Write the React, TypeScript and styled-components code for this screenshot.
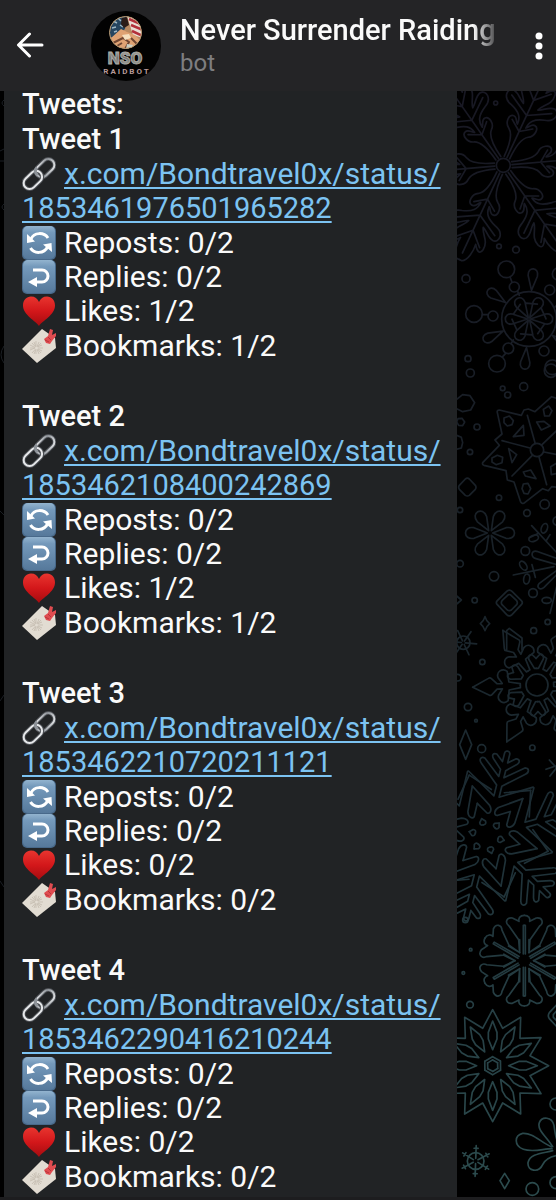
import React from "react";
import styled, { createGlobalStyle } from "styled-components";

const GlobalStyle = createGlobalStyle`
  * { box-sizing: border-box; }
  body {
    margin: 0;
    background: #1d1d1f;
    color: #fafafa;
    font-family: Roboto, "Liberation Sans", sans-serif;
  }
`;

const Page = styled.div`
  display: flex;
  flex-direction: column;
  min-height: 100vh;
`;

const Header = styled.header`
  position: sticky;
  top: 0;
  z-index: 2;
  display: flex;
  align-items: center;
  height: 91px;
  padding: 0 7px 0 12px;
  background: #242426;
`;

const IconButton = styled.button<{ $width: number }>`
  display: flex;
  align-items: center;
  justify-content: center;
  flex: none;
  width: ${(p) => p.$width}px;
  height: 48px;
  padding: 0;
  border: 0;
  background: none;
  color: #fff;
`;

const Avatar = styled.svg`
  flex: none;
  width: 70px;
  height: 70px;
  margin: 0 19px 0 43px;
`;

const Identity = styled.div`
  flex: 1;
  min-width: 0;
  margin-right: 28px;
`;

const ChatTitle = styled.h1`
  margin: 0;
  overflow: hidden;
  white-space: nowrap;
  font-size: 29px;
  font-weight: 500;
  line-height: 34px;
  mask-image: linear-gradient(to left, transparent, #000 28px);
`;

const ChatKind = styled.p`
  margin: 0;
  color: #7e7e80;
  font-size: 24px;
  line-height: 32px;
`;

const Chat = styled.main`
  position: relative;
  flex: 1;
  display: flex;
  margin-bottom: 3px;
  padding: 0 99px 0 4px;
  background: #000;
`;

const Wallpaper = styled.svg<{ $side: "left" | "right" }>`
  position: absolute;
  top: 0;
  ${(p) => p.$side}: 0;
  width: ${(p) => (p.$side === "left" ? 4 : 99)}px;
  height: 1106px;
`;

const Bubble = styled.article`
  flex: 1;
  margin-top: -4px;
  padding: 0 8px 3px 18px;
  background: #212325;
  font-size: 30px;
`;

const Heading = styled.h2`
  margin: 0;
  font-size: 29px;
  font-weight: 500;
  line-height: 35px;
`;

const Tweet = styled.section`
  & + & {
    margin-top: 36px;
  }
`;

const LinkLine = styled.p`
  margin: 0;
  line-height: 34px;
`;

const TweetLink = styled.a`
  color: #7cc3f2;
  text-decoration: underline;
  text-decoration-thickness: 2px;
  text-underline-offset: 3px;
  text-decoration-skip-ink: none;
`;

const TweetId = styled.span`
  font-size: 29px;
`;

const Stats = styled.ul`
  margin: 1px 0 0;
  padding: 0;
  list-style: none;
`;

const Stat = styled.li`
  line-height: 34px;

  &:last-child {
    padding-top: 1px;
  }
`;

const Emoji = styled.svg`
  width: 34px;
  height: 34px;
  margin-right: 8px;
  vertical-align: top;
`;

const tweets = [
  { id: "1853461976501965282", likes: 1, bookmarks: 1 },
  { id: "1853462108400242869", likes: 1, bookmarks: 1 },
  { id: "1853462210720211121", likes: 0, bookmarks: 0 },
  { id: "1853462290416210244", likes: 0, bookmarks: 0 },
];

const PaintDefs = styled.svg`
  position: absolute;
`;

function SharedPaints() {
  return (
    <PaintDefs width="0" height="0" aria-hidden="true">
      <defs>
        <linearGradient id="tile" x1="0" y1="0" x2="0" y2="1">
          <stop offset="0" stopColor="#93b4cf" />
          <stop offset="0.2" stopColor="#7499bb" />
          <stop offset="1" stopColor="#56799b" />
        </linearGradient>
        <linearGradient id="heart" x1="0" y1="0" x2="0" y2="1">
          <stop offset="0" stopColor="#e8352f" />
          <stop offset="0.5" stopColor="#d3171a" />
          <stop offset="1" stopColor="#a50c10" />
        </linearGradient>
        <linearGradient id="steel" x1="0" y1="0" x2="1" y2="1">
          <stop offset="0" stopColor="#f2f3f5" />
          <stop offset="0.5" stopColor="#8b9096" />
          <stop offset="1" stopColor="#eceef0" />
        </linearGradient>
      </defs>
    </PaintDefs>
  );
}

const ChainIcon = () => (
  <Emoji viewBox="0 0 34 34" aria-hidden="true" fill="none">
    <g transform="rotate(-44 17 17)">
      <rect x="15" y="11" width="21" height="12" rx="6" stroke="#4b4e53" strokeWidth="4" />
      <rect x="15" y="11" width="21" height="12" rx="6" stroke="url(#steel)" strokeWidth="2" />
      <rect x="-2" y="11" width="21" height="12" rx="6" stroke="#4b4e53" strokeWidth="4" />
      <rect x="-2" y="11" width="21" height="12" rx="6" stroke="#e6e8ea" strokeWidth="2" />
      <path d="M15 17C15 13 17 11 20 11" stroke="#8e9399" strokeWidth="3" />
    </g>
  </Emoji>
);

const Tile = () => (
  <>
    <rect width="34" height="34" rx="5" fill="#48698a" />
    <rect x="1" y="0" width="32" height="33" rx="5" fill="url(#tile)" />
  </>
);

const RepostIcon = () => (
  <Emoji viewBox="0 0 34 34" aria-hidden="true">
    <Tile />
    <g fill="none" stroke="#fff" strokeWidth="3">
      <path d="M9 13C12 6 22 6 26 12" />
      <path d="M25.500 21C22 28 12 28 8.500 22" />
    </g>
    <path d="M5 8L5 17L13 15.500ZM30 26L29.500 17L21 18.500Z" fill="#fff" />
  </Emoji>
);

const ReplyIcon = () => (
  <Emoji viewBox="0 0 34 34" aria-hidden="true">
    <Tile />
    <path d="M11 10h9a6 6 0 0 1 0 12H14" fill="none" stroke="#fff" strokeWidth="3" />
    <path d="M6 22l9-5v10z" fill="#fff" />
  </Emoji>
);

const HeartIcon = () => (
  <Emoji viewBox="0 0 34 34" aria-hidden="true">
    <path
      d="M17 32C14 27 1 21 1 11.500 1 6 4.500 2.500 9 2.500c4 0 6.500 2 8 5.500 1.500-3.500 4-5.500 8-5.500 4.500 0 8 3.500 8 9C33 21 20 27 17 32z"
      fill="url(#heart)"
    />
  </Emoji>
);

const BookmarkIcon = () => (
  <Emoji viewBox="0 0 34 34" aria-hidden="true">
    <path d="M20 0L0 20L15 34L34 19L33 9Z" fill="#e2dcd2" />
    <g stroke="#c9c1b5" strokeWidth="1">
      <path d="M14 12v13M8 19h13M10 14l9 10M19 14L10 24M12 13l5 12M8 21l12-5M8 16l12 6M17 13l-5 12" />
    </g>
    <circle cx="14.500" cy="19" r="1.500" fill="#e2dcd2" />
    <path d="M22 10L26 7L28 0L31 1L30 6L34 4V7L30 12L28 15L24 14Z" fill="#e04c50" />
    <path d="M23 11l4 2M26 8l3 3" stroke="#b9343a" strokeWidth="1" />
  </Emoji>
);

const range = (n: number) => Array.from({ length: n }, (_, i) => i);

type FlakeProps = { x: number; y: number; arms?: number; turn?: number; children: React.ReactNode };

/* Repeats one arm around the centre of a snowflake. */
const Flake = ({ x, y, arms = 6, turn = 0, children }: FlakeProps) => (
  <g transform={`translate(${x} ${y})`}>
    {range(arms).map((i) => (
      <g key={i} transform={`rotate(${turn + (i * 360) / arms})`}>
        {children}
      </g>
    ))}
  </g>
);

const Mirror = ({ d }: { d: string }) => (
  <>
    <path d={d} />
    <path d={d} transform="scale(1 -1)" />
  </>
);

const bubbles: number[][] = [
  [167, 39, 6], [177, 469, 7], [228, 479, 10], [78, 566, 12], [84, 806, 9], [199, 538, 25],
  [223, 591, 15], [102, 672, 25], [159, 678, 15], [205, 775, 16], [171, 821, 25], [312, 783, 15],
  [329, 600, 15], [355, 552, 18], [337, 832, 22], [91, 849, 12], [251, 890, 12], [188, 895, 7],
  [203, 915, 9], [111, 1011, 9], [90, 1086, 8], [177, 1223, 8], [314, 1243, 14], [60, 1260, 8],
  [261, 1269, 10], [256, 1383, 13], [60, 1421, 10], [162, 1459, 14], [279, 1509, 13], [104, 1531, 8],
  [323, 1596, 8], [281, 1622, 9], [352, 1293, 13], [333, 842, 20], [127, 1716, 8], [53, 1763, 10],
  [84, 1851, 11], [108, 1892, 4], [125, 1976, 12], [277, 1973, 8], [92, 2579, 4], [70, 2649, 4],
  [90, 2744, 10], [277, 3297, 19], [348, 3042, 18], [348, 3278, 18], [76, 2490, 8],
];

const Petal = () => <path d="M8 0L48-16C82-22 82 22 48 16Z" />;

function Pattern() {
  return (
    <g fill="none" stroke="#fff" strokeWidth="5" strokeLinecap="round" strokeLinejoin="round">
      {bubbles.map(([cx, cy, r]) => (
        <circle key={`${cx}-${cy}`} cx={cx} cy={cy} r={r} />
      ))}

      <circle cx="190" cy="226" r="21" />
      <Flake x={190} y={226} turn={-5}>
        <Mirror d="M26-9C60-9 95-12 108-32C118-50 146-50 148-36C150-24 136-22 130-14C152-14 165-25 175-55C183-88 216-88 218-68C218-50 200-40 194-24C215-30 225-56 255-52C275-48 265-35 250-25C270-28 304-24 312-8L312 0" />
        <path d="M26 0H290M112 0L136-34M112 0L136 34M165 0L202-66M165 0L202 66M215 0L254-40M215 0L254 40" />
      </Flake>

      <circle cx="267" cy="687" r="82" />
      <Flake x={267} y={687}>
        <path d="M4 0L50-15C78-20 78 20 50 15ZM46 16L26 44" />
      </Flake>
      <Flake x={267} y={687} turn={-25}>
        <path d="M86 0L130-14C158-18 158 18 130 14Z" />
      </Flake>
      <path d="M127 674H144M211 563L216 577M233 604L238 616M197 790L188 800M213 761L220 750" />

      <path d="M50 928L68 914L90 917L104 938L92 960L68 965L50 956M54 986L66 985L74 996L68 1007L56 1006L50 996ZM50 1036L64 1042L68 1058L64 1074L50 1078" />
      <path d="M76 1167Q82 1162 88 1167L106 1186Q110 1192 106 1198L88 1216Q82 1220 76 1216L58 1198Q54 1192 58 1186Z" />

      <circle cx="291" cy="1080" r="20" />
      <path d="M352 926L335 920L285 965L265 957L252 960L244 976L178 960Q170 960 172 968L186 1032L165 1050L178 1066L128 1118Q126 1124 132 1126L198 1142L202 1170L222 1176L242 1236Q248 1244 254 1238L308 1196L325 1202L335 1190L352 1192" />
      <path d="M285 1058L262 976M270 1074L186 1052M277 1096L216 1158M297 1101L320 1184M306 1064L352 1020M312 1086L352 1094" />
      <path d="M192 984L208 978L220 992L216 1004L202 1008L192 998ZM310 958L326 948L336 962L328 978L314 978ZM156 1104L172 1096L188 1102L186 1118L168 1124L156 1116ZM250 1182L264 1180L272 1196L264 1212L252 1210L246 1196Z" />
      <path d="M250 1006L252 1036L220 1040ZM290 996L312 994L330 1008L304 1020ZM206 1076L230 1094L216 1118ZM250 1146L272 1140L288 1166L256 1158ZM352 1118L332 1130L334 1154L352 1150" />

      <Flake x={150} y={1329}>
        <Petal />
      </Flake>
      <path d="M200 1504Q208 1496 216 1504L244 1532Q250 1538 244 1544L216 1574Q208 1582 200 1574L172 1544Q166 1538 172 1532Z" />
      <path d="M202 1517Q208 1510 214 1517L230 1532Q234 1538 230 1544L214 1560Q208 1564 202 1560L186 1544Q182 1538 186 1532Z" />
      <path d="M135 1580Q138 1592 149 1601Q138 1610 135 1622Q132 1610 121 1601Q132 1592 135 1580ZM200 1680V1622L208 1615L246 1644V1680M50 1518L64 1530L50 1542" />

      <path d="M275 1307L352 1390M220 1455L342 1430M330 1570L350 1490M268 1343L296 1330M276 1424L286 1462M320 1350L330 1334" />
      <g>
        <ellipse cx="313" cy="1315" rx="9" ry="15" transform="rotate(20 313 1315)" />
        <ellipse cx="281" cy="1345" rx="15" ry="9" transform="rotate(-20 281 1345)" />
        <ellipse cx="250" cy="1427" rx="9" ry="15" transform="rotate(-35 250 1427)" />
        <ellipse cx="260" cy="1467" rx="9" ry="15" transform="rotate(10 260 1467)" />
        <ellipse cx="320" cy="1531" rx="14" ry="9" />
      </g>
      <path d="M352 1406L290 1384C272 1380 272 1402 288 1406L352 1424M352 1440L298 1480C288 1492 300 1502 312 1492L352 1452" />
      <circle cx="70" cy="1658" r="20" />
      <Flake x={70} y={1658} turn={5}>
        <path d="M6 0H40" />
      </Flake>

      <circle cx="291" cy="1785" r="33" />
      <Flake x={291} y={1785} turn={-2}>
        <Mirror d="M193 0L145-25Q140-28 136-24L120-8H104L116-26C122-44 102-56 88-44L84-12L50-6M50-6V0" />
      </Flake>
      <Flake x={291} y={1785} turn={28}>
        <Mirror d="M50-6L78-22Q92-24 92-12L80 0M50-6V0" />
      </Flake>

      <path d="M77 1920L95 1964L77 2008L59 1964Z" />

      <Flake x={140} y={2238} turn={-76}>
        <Mirror d="M262 0Q262-8 254-8H228L246-30C248-42 238-44 230-36L204-8H182L226-62C228-76 216-78 208-68L156-8H122L176-100" />
      </Flake>
      <Flake x={140} y={2238} turn={-46}>
        <Mirror d="M156 0L86-34C70-38 60-28 66-20L102 0M190 0L130-52M54 0L44-9Q34-10 35 0" />
      </Flake>

      <path d="M318 2038L352 2026M328 2010L352 2036M330 2058L352 2030" />

      <Flake x={253} y={2612} turn={30}>
        <Mirror d="M136 0C136-14 126-18 118-16L128-36C130-56 112-58 104-46L63-17L24-14L63-14M20-3H106V0" />
      </Flake>

      <path
        d={`M${range(24)
          .map((i) => {
            const r = i % 2 ? 116 : 168;
            const a = (i * Math.PI) / 12;
            return `${Math.round(158 + r * Math.cos(a))} ${Math.round(2927 + r * Math.sin(a))}`;
          })
          .join("L")}Z`}
      />
      <Flake x={158} y={2927} arms={12}>
        <path d="M48 0L80-13H100L134 0L100 13H80Z" />
      </Flake>
      <Flake x={158} y={2927} turn={30}>
        <path d="M27 0L14 23M17 0L9 15" />
      </Flake>

      <path d="M352 2742L328 2768Q322 2778 328 2786L352 2812M352 2760L340 2774V2782L352 2794" />
      <path d="M338 3170C320 3140 290 3120 298 3098C306 3078 336 3080 342 3106C344 3120 346 3140 352 3152" />
      <path d="M336 3176C310 3176 280 3188 250 3178C222 3168 222 3136 248 3130C280 3128 300 3156 334 3170" />
      <path d="M338 3182C310 3190 270 3190 264 3218C262 3244 296 3250 308 3224C316 3206 330 3200 352 3196" />

      <circle cx="107" cy="3213" r="25" />
      <Flake x={107} y={3213} turn={-28}>
        <path d="M8 0H46M38-6V6" />
      </Flake>
      <path d="M194 3250L208 3272L194 3296L180 3272Z" />
    </g>
  );
}

function SnowWallpaper() {
  return (
    <>
      <Wallpaper $side="right" viewBox="51 3 297 3318" aria-hidden="true">
        <defs>
          <linearGradient id="frost" x1="0" y1="0" x2="0" y2="1">
            <stop offset="0" stopColor="#181823" />
            <stop offset="0.4" stopColor="#192128" />
            <stop offset="0.65" stopColor="#1c2c33" />
            <stop offset="0.85" stopColor="#274146" />
            <stop offset="1" stopColor="#2c4c4e" />
          </linearGradient>
          <mask id="flakes" maskUnits="userSpaceOnUse" x="51" y="3" width="297" height="3318">
            <Pattern />
          </mask>
        </defs>
        <rect x="51" y="3" width="297" height="3318" fill="url(#frost)" mask="url(#flakes)" />
      </Wallpaper>
      <Wallpaper $side="left" viewBox="0 0 4 1106" aria-hidden="true">
        <g fill="none" stroke="#1b1f24">
          <path d="M4 9Q0 12 4 15M0 60L4 58M0 70H4M4 113Q0 116 4 119M4 255Q-2 264 4 272M0 420L4 424M0 610L4 604M0 790L4 796" />
        </g>
      </Wallpaper>
    </>
  );
}

const GroupAvatar = () => (
  <Avatar viewBox="0 0 70 70" role="img" aria-label="Never Surrender Raiding avatar">
    <defs>
      <clipPath id="disc"><circle cx="35" cy="35" r="35" /></clipPath>
      <clipPath id="emblem"><circle cx="34.500" cy="21.500" r="16" /></clipPath>
      <linearGradient id="metal" x1="0" y1="0" x2="0" y2="1">
        <stop offset="0" stopColor="#c9c9c4" />
        <stop offset="0.5" stopColor="#6f706c" />
        <stop offset="1" stopColor="#b4b4ae" />
      </linearGradient>
    </defs>
    <circle cx="35" cy="35" r="35" fill="#020202" />
    <g clipPath="url(#emblem)">
      <rect x="18" y="5" width="34" height="34" fill="#b98a62" />
      <path d="M18 5H36L34 18L26 25L18 27Z" fill="#26455f" />
      <path d="M22 10l4 2M27 7l3 3M21 17l4-1M29 14l3 2M23 21l3-1" stroke="#9fb7c4" strokeWidth="1.500" />
      <path d="M36 5H52V27L42 24Z" fill="#e9ddd5" />
      <path d="M38 8L52 14M40 14L52 19M41 20L52 25" stroke="#b3303a" strokeWidth="2.500" />
      <path d="M31 7l5-1 2 8-5 3-3-4z" fill="#2b1c18" />
      <path d="M20 27L30 18L36 21L44 24L50 30L42 38H26Z" fill="#dfa273" />
      <path d="M22 32L32 27L38 31L34 38M40 27L46 33M26 35l5-3" stroke="#6f4632" strokeWidth="2" fill="none" />
      <path d="M31 24l7-1 2 4-6 2z" fill="#f5dfbf" />
      <path d="M36 33l6 1-2 4h-5z" fill="#c9cfc4" />
    </g>
    <circle cx="34.500" cy="21.500" r="16" fill="none" stroke="#b99a72" strokeWidth="1" />
    <g clipPath="url(#disc)" fontFamily="Roboto, sans-serif" textAnchor="middle">
      <text x="34" y="53" fontSize="17" fontWeight="900" fill="url(#metal)" stroke="#a9a9a4">NSO</text>
      <text x="36" y="63" fontSize="8" fontWeight="700" fill="#b79a98" letterSpacing="2">RAIDBOT</text>
    </g>
  </Avatar>
);

export default function App() {
  return (
    <Page>
      <GlobalStyle />
      <SharedPaints />
      <Header>
        <IconButton $width={36} type="button" aria-label="Back">
          <svg width="28" height="28" viewBox="0 0 28 28" fill="none" stroke="currentColor" strokeWidth="3" strokeLinecap="round" strokeLinejoin="round">
            <path d="M26 13H3M13.500 2L2.500 13L13.500 24" />
          </svg>
        </IconButton>
        <GroupAvatar />
        <Identity>
          <ChatTitle>Never Surrender Raiding</ChatTitle>
          <ChatKind>bot</ChatKind>
        </Identity>
        <IconButton $width={20} type="button" aria-label="More options">
          <svg width="8" height="28" viewBox="0 0 8 28" fill="currentColor">
            <circle cx="4" cy="4" r="3.500" />
            <circle cx="4" cy="14" r="3.500" />
            <circle cx="4" cy="24" r="3.500" />
          </svg>
        </IconButton>
      </Header>
      <Chat>
        <SnowWallpaper />
        <Bubble>
          <Heading>Tweets:</Heading>
          {tweets.map((tweet, i) => (
            <Tweet key={tweet.id}>
              <Heading>Tweet {i + 1}</Heading>
              <LinkLine>
                <ChainIcon />
                <TweetLink href={`https://x.com/Bondtravel0x/status/${tweet.id}`}>
                  x.com/Bondtravel0x/status/
                  <wbr />
                  <TweetId>{tweet.id}</TweetId>
                </TweetLink>
              </LinkLine>
              <Stats>
                <Stat><RepostIcon />Reposts: 0/2</Stat>
                <Stat><ReplyIcon />Replies: 0/2</Stat>
                <Stat><HeartIcon />Likes: {tweet.likes}/2</Stat>
                <Stat><BookmarkIcon />Bookmarks: {tweet.bookmarks}/2</Stat>
              </Stats>
            </Tweet>
          ))}
        </Bubble>
      </Chat>
    </Page>
  );
}
